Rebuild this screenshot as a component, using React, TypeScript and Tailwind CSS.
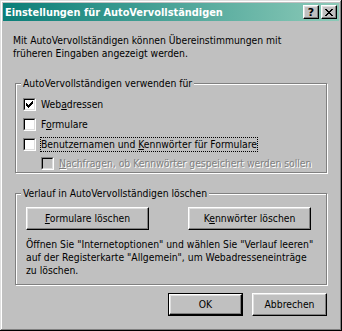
import React from "react";

const raised =
  "border border-t-white border-l-white border-b-black border-r-black shadow-[inset_-1px_-1px_0_#808080,inset_1px_1px_0_#dfdfdf]";

function CheckMark() {
  // classic 7x7 pixel check mark
  const cols = [2, 3, 4, 3, 2, 1, 0];
  const d = cols.map((r, i) => `M${i} ${r}h1v3h-1z`).join("");
  return (
    <svg width="7" height="7" viewBox="0 0 7 7" shapeRendering="crispEdges">
      <path d={d} fill="#000" />
    </svg>
  );
}

function Checkbox({ checked, disabled }: { checked?: boolean; disabled?: boolean }) {
  return (
    <div className="w-[13px] h-[13px] shrink-0 flex border border-t-[#808080] border-l-[#808080] border-b-white border-r-white">
      <div
        className={`flex-1 flex items-center justify-center border border-t-black border-l-black border-b-[#dfdfdf] border-r-[#dfdfdf] ${
          disabled ? "bg-[#c0c0c0]" : "bg-white"
        }`}
      >
        {checked && <CheckMark />}
      </div>
    </div>
  );
}

function Group({ title, className, children }: { title: string; className: string; children: React.ReactNode }) {
  return (
    <div
      className={`relative ml-[12px] w-[312px] border border-[#808080] shadow-[1px_1px_0_#fff,inset_1px_1px_0_#fff] ${className}`}
    >
      <span className="absolute left-[5px] top-[-7px] px-[2px] bg-[#c0c0c0] whitespace-nowrap">{title}</span>
      {children}
    </div>
  );
}

export default function App() {
  return (
    <div
      className="w-[342px] h-[331px] bg-[#c0c0c0] p-[3px] flex flex-col text-[10.3px] leading-[13px] text-black font-['DejaVu_Sans_Condensed','DejaVu_Sans',sans-serif] shadow-[inset_-1px_-1px_0_#000,inset_1px_1px_0_#dfdfdf,inset_-2px_-2px_0_#808080,inset_2px_2px_0_#fff] overflow-hidden"
    >
      {/* Title bar */}
      <div className="h-[18px] shrink-0 flex items-center pl-[2px] pr-[2px] bg-[linear-gradient(to_right,#0a7e78,#8ccab8)]">
        <span className="flex-1 text-white font-bold text-[10.9px] whitespace-nowrap">Einstellungen für AutoVervollständigen</span>
        <div className="flex gap-[2px]">
          <div className={`w-[16px] h-[14px] bg-[#c0c0c0] flex items-center justify-center ${raised}`}>
            <span className="font-bold text-[11px] leading-[11px] font-['DejaVu_Sans',sans-serif]">?</span>
          </div>
          <div className={`w-[16px] h-[14px] bg-[#c0c0c0] flex items-center justify-center ${raised}`}>
            <svg width="8" height="7" viewBox="0 0 8 7" shapeRendering="crispEdges">
              <path
                d="M0 0h2v1h-2zM6 0h2v1h-2zM1 1h2v1h-2zM5 1h2v1h-2zM2 2h4v1h-4zM3 3h2v1h-2zM2 4h4v1h-4zM1 5h2v1h-2zM5 5h2v1h-2zM0 6h2v1h-2zM6 6h2v1h-2z"
                fill="#000"
              />
            </svg>
          </div>
        </div>
      </div>

      {/* Description */}
      <p className="mt-[13px] ml-[10px] whitespace-nowrap">
        Mit AutoVervollständigen können Übereinstimmungen mit
        <br />
        früheren Eingaben angezeigt werden.
      </p>

      {/* Group 1 */}
      <Group title="AutoVervollständigen verwenden für" className="mt-[23px] h-[90px] pt-[14px] pl-[7px]">
        <div className="flex flex-col">
          <div className="flex items-center h-[13px]">
            <Checkbox checked />
            <span className="ml-[5px]">
              Web<u>a</u>dressen
            </span>
          </div>
          <div className="flex items-center h-[13px] mt-[7px]">
            <Checkbox />
            <span className="ml-[5px]">
              F<u>o</u>rmulare
            </span>
          </div>
          <div className="flex items-center h-[13px] mt-[7px]">
            <Checkbox />
            <span className="ml-[5px] outline outline-1 outline-dotted outline-black whitespace-nowrap">
              Benutzernamen und <u>K</u>ennwörter für Formulare
            </span>
          </div>
          <div className="flex items-center h-[13px] mt-[6px] ml-[18px]">
            <Checkbox disabled />
            <span className="ml-[5px] text-[#808080] [text-shadow:1px_1px_0_#fff] whitespace-nowrap">
              <u>N</u>achfragen, ob Kennwörter gespeichert werden sollen
            </span>
          </div>
        </div>
      </Group>

      {/* Group 2 */}
      <Group title="Verlauf in AutoVervollständigen löschen" className="mt-[20px] h-[92px] pt-[13px] pl-[10px]">
        <div className="flex gap-[39px]">
          <button className={`w-[123px] h-[23px] bg-[#c0c0c0] ${raised}`}>
            <u>F</u>ormulare löschen
          </button>
          <button className={`w-[123px] h-[23px] bg-[#c0c0c0] ${raised}`}>
            K<u>e</u>nnwörter löschen
          </button>
        </div>
        <p className="mt-[8px] whitespace-nowrap">
          Öffnen Sie "Internetoptionen" und wählen Sie "Verlauf leeren"
          <br />
          auf der Registerkarte "Allgemein", um Webadresseneinträge
          <br />
          zu löschen.
        </p>
      </Group>

      {/* Footer */}
      <div className="mt-[8px] flex justify-end gap-[9px] mr-[12px]">
        <div className="w-[75px] h-[23px] border border-black flex">
          <button className={`flex-1 bg-[#c0c0c0] ${raised}`}>OK</button>
        </div>
        <button className={`w-[75px] h-[23px] bg-[#c0c0c0] ${raised}`}>Abbrechen</button>
      </div>
    </div>
  );
}
